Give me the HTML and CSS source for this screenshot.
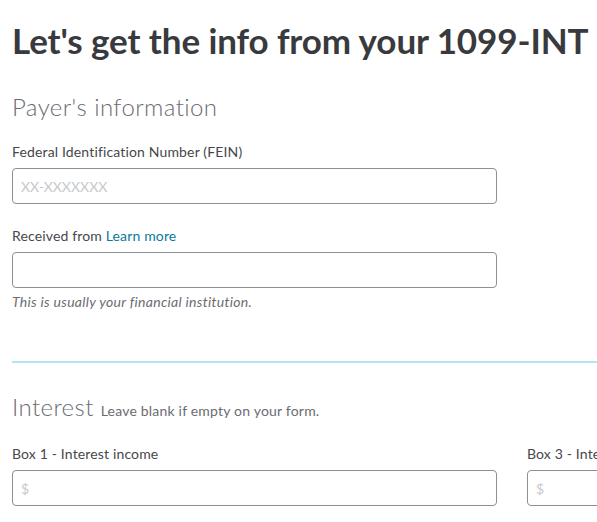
FILE: index.html
```html
<!DOCTYPE html>
<html lang="en">
<head>
  <meta charset="UTF-8">
  <title>1099-INT</title>
  <link rel="stylesheet" href="styles.css">
</head>
<body>

  <div class="page">
    <h1>Let's get the info from your 1099-INT</h1>

    <section class="payer">
      <h2>Payer's information</h2>

      <div class="champ">
        <label for="fein">Federal Identification Number (FEIN)</label>
        <input type="text" id="fein" placeholder="XX-XXXXXXX">
      </div>

      <div class="champ">
        <label for="payeur">Received from <a href="#">Learn more</a></label>
        <input type="text" id="payeur">
        <p class="aide">This is usually your financial institution.</p>
      </div>
    </section>

    <hr class="separateur">

    <section class="interet">
      <h2>Interest <span class="sous-titre">Leave blank if empty on your form.</span></h2>

      <div class="grille">
        <div class="champ">
          <label for="box1">Box 1 - Interest income</label>
          <input type="text" id="box1" placeholder="$">
        </div>
        <div class="champ">
          <label for="box3">Box 3 - Interest on U.S. Savings Bonds and Treasury obligations</label>
          <input type="text" id="box3" placeholder="$">
        </div>
      </div>
    </section>
  </div>

</body>
</html>
```

FILE: styles.css
```css
body {
  margin: 0;
  font-family: Lato, "Open Sans", sans-serif;
  color: #393a3d;
  background: #fff;
  overflow: hidden;
}

.page {
  width: 1000px;
  padding: 0 0 0 12px;
}

h1 {
  margin: 0;
  padding-top: 20px;
  font-size: 35px;
  font-weight: bold;
  line-height: 40px;
  letter-spacing: -0.1px;
}

h2 {
  margin: 0;
  font-size: 24px;
  font-weight: 300;
  color: #6b6c72;
  line-height: 30px;
  letter-spacing: 0.4px;
}

.payer h2 {
  margin-top: 32px;
}

.champ {
  margin-top: 23px;
}

.payer h2 + .champ {
  margin-top: 21px;
}

label {
  display: block;
  font-size: 14px;
  line-height: 18px;
  margin-bottom: 7px;
  color: #46474b;
  letter-spacing: 0.15px;
}

label a {
  color: #0a7a9b;
  text-decoration: none;
}

input {
  display: block;
  box-sizing: border-box;
  width: 485px;
  height: 36px;
  padding: 0 8px;
  border: 1px solid #8d9096;
  border-radius: 4px;
  font-family: inherit;
  font-size: 14px;
  color: #393a3d;
}

input::placeholder {
  color: #c6c8cc;
}

.aide {
  margin: 6px 0 0;
  font-size: 14px;
  font-style: italic;
  color: #6b6c72;
  line-height: 16px;
  letter-spacing: 0.3px;
}

.separateur {
  margin: 51px 0 0;
  border: none;
  border-top: 2px solid #b0e5f7;
}

.interet h2 {
  margin-top: 29px;
}

.sous-titre {
  font-size: 14px;
  font-weight: normal;
  color: #6b6c72;
  letter-spacing: 0.2px;
}

.grille {
  display: grid;
  grid-template-columns: 485px 485px;
  column-gap: 30px;
}

.grille .champ {
  margin-top: 19px;
}

.grille label {
  white-space: nowrap;
}
```
